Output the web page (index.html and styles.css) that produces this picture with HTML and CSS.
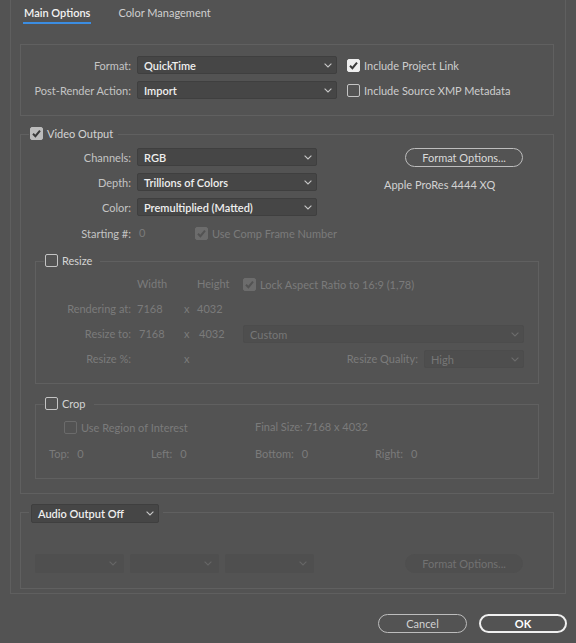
FILE: index.html
```html
<!DOCTYPE html>
<html>
<head>
<meta charset="utf-8">
<link rel="stylesheet" href="styles.css">
</head>
<body>
<div class="frame">
  <div class="tabs">
    <div class="tab active">Main Options</div>
    <div class="tab">Color Management</div>
  </div>

  <div class="box">
    <div class="frow">
      <span class="lbl">Format:</span>
      <div class="dd w200"><span>QuickTime</span><svg class="chev" viewBox="0 0 8 5"><path d="M0.6 0.6 L4 4 L7.4 0.6"/></svg></div>
      <div class="cb ml10"><span class="check on"><svg viewBox="0 0 13 13"><path d="M3 6.8 L5.4 9.2 L10 3.6"/></svg></span><span class="cbt">Include Project Link</span></div>
    </div>
    <div class="frow">
      <span class="lbl">Post-Render Action:</span>
      <div class="dd w200"><span>Import</span><svg class="chev" viewBox="0 0 8 5"><path d="M0.6 0.6 L4 4 L7.4 0.6"/></svg></div>
      <div class="cb ml10"><span class="check"></span><span class="cbt">Include Source XMP Metadata</span></div>
    </div>
  </div>

  <div class="group video">
    <div class="ghead vhead"><span class="check on gray"><svg viewBox="0 0 13 13"><path d="M3 6.8 L5.4 9.2 L10 3.6"/></svg></span><span class="ght">Video Output</span></div>
    <div class="vtop">
      <div class="vleft">
        <div class="frow">
          <span class="lbl">Channels:</span>
          <div class="dd w180"><span>RGB</span><svg class="chev" viewBox="0 0 8 5"><path d="M0.6 0.6 L4 4 L7.4 0.6"/></svg></div>
        </div>
        <div class="frow">
          <span class="lbl">Depth:</span>
          <div class="dd w180"><span>Trillions of Colors</span><svg class="chev" viewBox="0 0 8 5"><path d="M0.6 0.6 L4 4 L7.4 0.6"/></svg></div>
        </div>
        <div class="frow">
          <span class="lbl">Color:</span>
          <div class="dd w180"><span>Premultiplied (Matted)</span><svg class="chev" viewBox="0 0 8 5"><path d="M0.6 0.6 L4 4 L7.4 0.6"/></svg></div>
        </div>
      </div>
      <div class="vright">
        <div class="pill">Format Options...</div>
        <div class="codec">Apple ProRes 4444 XQ</div>
      </div>
    </div>
    <div class="frow srow">
      <span class="lbl">Starting #:</span>
      <span class="sval dis">0</span>
      <div class="cb"><span class="check on disabled"><svg viewBox="0 0 13 13"><path d="M3 6.8 L5.4 9.2 L10 3.6"/></svg></span><span class="cbt dis">Use Comp Frame Number</span></div>
    </div>

    <div class="group sub resize">
      <div class="ghead shead"><span class="check"></span><span class="ght">Resize</span></div>
      <div class="rrow first">
        <span class="rl"></span>
        <span class="c1 dis">Width</span>
        <span class="cx"></span>
        <span class="c2 dis">Height</span>
        <div class="cb"><span class="check on disabled"><svg viewBox="0 0 13 13"><path d="M3 6.8 L5.4 9.2 L10 3.6"/></svg></span><span class="cbt dis">Lock Aspect Ratio to 16:9 (1,78)</span></div>
      </div>
      <div class="rrow">
        <span class="rl dis">Rendering at:</span>
        <span class="c1 dis">7168</span>
        <span class="cx dis">x</span>
        <span class="c2 dis">4032</span>
      </div>
      <div class="rrow">
        <span class="rl dis">Resize to:</span>
        <span class="c1 dis inp">7168</span>
        <span class="cx dis">x</span>
        <span class="c2 dis inp">4032</span>
        <div class="dd dis w281"><span>Custom</span><svg class="chev" viewBox="0 0 8 5"><path d="M0.6 0.6 L4 4 L7.4 0.6"/></svg></div>
      </div>
      <div class="rrow">
        <span class="rl dis">Resize %:</span>
        <span class="c1"></span>
        <span class="cx dis">x</span>
        <span class="c2"></span>
        <div class="quality">
          <span class="dis ql">Resize Quality:</span>
          <div class="dd dis w100"><span>High</span><svg class="chev" viewBox="0 0 8 5"><path d="M0.6 0.6 L4 4 L7.4 0.6"/></svg></div>
        </div>
      </div>
    </div>

    <div class="group sub crop">
      <div class="ghead shead"><span class="check"></span><span class="ght">Crop</span></div>
      <div class="crow region">
        <div class="cb roi"><span class="check disabled"></span><span class="cbt dis">Use Region of Interest</span></div>
        <span class="dis">Final Size: 7168 x 4032</span>
      </div>
      <div class="crow edges">
        <div class="edge e1"><span class="dis">Top:</span><span class="dis">0</span></div>
        <div class="edge e2"><span class="dis">Left:</span><span class="dis">0</span></div>
        <div class="edge e3"><span class="dis">Bottom:</span><span class="dis">0</span></div>
        <div class="edge"><span class="dis">Right:</span><span class="dis">0</span></div>
      </div>
    </div>
  </div>

  <div class="group audio">
    <div class="ahead">
      <div class="dd w128"><span>Audio Output Off</span><svg class="chev" viewBox="0 0 8 5"><path d="M0.6 0.6 L4 4 L7.4 0.6"/></svg></div>
    </div>
    <div class="arow">
      <div class="dd dis2 w89"><span></span><svg class="chev" viewBox="0 0 8 5"><path d="M0.6 0.6 L4 4 L7.4 0.6"/></svg></div>
      <div class="dd dis2 w89"><span></span><svg class="chev" viewBox="0 0 8 5"><path d="M0.6 0.6 L4 4 L7.4 0.6"/></svg></div>
      <div class="dd dis2 w89"><span></span><svg class="chev" viewBox="0 0 8 5"><path d="M0.6 0.6 L4 4 L7.4 0.6"/></svg></div>
      <div class="pill disabled">Format Options...</div>
    </div>
  </div>
</div>

<div class="footer">
  <div class="btn cancel">Cancel</div>
  <div class="btn ok">OK</div>
</div>
</body>
</html>
```
FILE: styles.css
```css
* { box-sizing: border-box; }
html, body { margin: 0; padding: 0; }
body {
  background: #535353;
  font-family: Lato, "Open Sans", sans-serif;
  font-size: 11px;
  line-height: 14px;
  color: #c6c6c6;
  width: 576px;
  height: 643px;
  overflow: hidden;
}

.frame {
  margin-left: 10px;
  width: 556px;
  border: 1px solid #5f5f5f;
  border-top: none;
  padding: 0 11px 4px 9px;
}

.tabs { display: flex; gap: 26px; padding-left: 3px; }
.tab {
  padding: 6px 1px 2px;
  line-height: 14px;
  border-bottom: 2px solid transparent;
  color: #cfcfcf;
}
.tab.active { border-bottom-color: #3b8de2; color: #f2f2f2; font-weight: 600; }

.box {
  margin-top: 20px;
  border: 1px solid #606060;
  padding: 11px 0 16px;
}

.frow { display: flex; align-items: center; height: 18px; }
.frow + .frow { margin-top: 7px; }
.lbl { width: 110px; text-align: right; margin-right: 6px; color: #c4c4c4; padding-top: 1px; }

.dd {
  display: flex;
  align-items: center;
  justify-content: space-between;
  height: 18px;
  background: #464646;
  border: 1px solid #3f3f3f;
  border-radius: 2px;
  padding: 1px 4px 0 6px;
  color: #efefef;
  font-weight: 600;
}
.dd .chev { width: 8px; height: 5px; fill: none; stroke: #c8c8c8; stroke-width: 1.1; margin-top: -1px; }
.dd.dis { background: #4e4e4e; border-color: #4c4c4c; color: #777; font-weight: 400; }
.dd.dis .chev { stroke: #6c6c6c; }
.dd.dis2 { background: #4f4f4f; border-color: #4f4f4f; height: 19px; padding-right: 6px; }
.dd.dis2 .chev { stroke: #666; }
.w200 { width: 200px; }
.w180 { width: 180px; }
.w281 { width: 281px; }
.w100 { width: 100px; }
.w128 { width: 128px; height: 19px; padding-right: 4px; }
.w89 { width: 89px; }

.cb { display: flex; align-items: center; gap: 4px; }
.ml10 { margin-left: 10px; }
.cbt { color: #cdcdcd; padding-top: 1px; }
.check {
  width: 13px;
  height: 13px;
  border-radius: 2px;
  border: 1.5px solid #c4c4c4;
  display: flex;
  align-items: center;
  justify-content: center;
  flex: none;
}
.check svg { width: 13px; height: 13px; fill: none; stroke: #3a3a3a; stroke-width: 2; flex: none; }
.check.on { background: #eeeeee; border-color: #eeeeee; }
.check.on.gray { background: #bdbdbd; border-color: #bdbdbd; }
.check.disabled { border-color: #6b6b6b; }
.check.on.disabled { background: #6c6c6c; border-color: #6c6c6c; }
.check.on.disabled svg { stroke: #535353; }

.dis { color: #7b7b7b; }

.group { border: 1px solid #606060; }
.video { margin-top: 18px; }
.ghead {
  display: flex;
  align-items: center;
  gap: 4px;
  width: fit-content;
  height: 13px;
  background: #535353;
}
.ght { color: #d4d4d4; }
.vhead { margin: -8px 0 0 8px; padding: 0 5px 0 1px; }

.vtop { display: flex; margin-top: 8px; }
.vright { margin-left: 67px; display: flex; flex-direction: column; align-items: flex-start; }
.pill {
  width: 118px;
  height: 19px;
  margin-left: 21px;
  border: 1.5px solid #bdbdbd;
  border-radius: 10px;
  display: flex;
  align-items: center;
  justify-content: center;
  color: #dadada;
  padding-top: 1px;
}
.codec { margin-top: 11px; color: #d2d2d2; }

.srow { margin-top: 10px; height: 14px; }
.sval { width: 58px; padding-left: 2px; }

.sub { margin: 21px 14px 0; }
.shead { margin: -8px 0 0 8px; padding: 0 8px 0 1px; }
.resize { padding-bottom: 15px; }

.rrow { display: flex; align-items: center; height: 18px; margin-top: 7px; }
.rrow.first { margin-top: 8px; }
.rl { width: 95px; text-align: right; margin-right: 6px; }
.c1 { width: 47px; }
.cx { width: 13px; }
.c2 { width: 46px; }
.inp { padding-left: 2px; }
.quality { display: flex; align-items: center; margin-left: auto; margin-right: 14px; }
.ql { margin-right: 6px; }

.crop { margin-top: 20px; margin-bottom: 14px; padding-bottom: 17px; }
.crow { display: flex; align-items: center; height: 14px; }
.region { margin-top: 10px; }
.roi { margin-left: 28px; width: 191px; }
.edges { margin-top: 13px; padding-left: 13px; }
.edge { display: flex; gap: 8px; }
.e1 { width: 102px; }
.e2 { width: 104px; }
.e3 { width: 120px; }

.audio { margin-top: 18px; padding-bottom: 15px; }
.ahead {
  width: fit-content;
  margin: -9px 0 0 8px;
  padding: 0 4px 0 2px;
  background: #535353;
}
.arow { display: flex; align-items: center; gap: 6px; margin-top: 31px; padding-left: 14px; }
.pill.disabled {
  margin-left: 85px;
  border-color: #4f4f4f;
  background: #4f4f4f;
  color: #727272;
}

.footer {
  display: flex;
  justify-content: flex-end;
  gap: 12px;
  padding: 20px 9px 0;
}
.btn {
  height: 19px;
  border-radius: 10px;
  border: 1.5px solid #bdbdbd;
  display: flex;
  align-items: center;
  justify-content: center;
  color: #d2d2d2;
  padding-top: 1px;
}
.cancel { width: 89px; }
.ok { width: 88px; border: 2px solid #f0f0f0; color: #ffffff; font-weight: 700; }
```
